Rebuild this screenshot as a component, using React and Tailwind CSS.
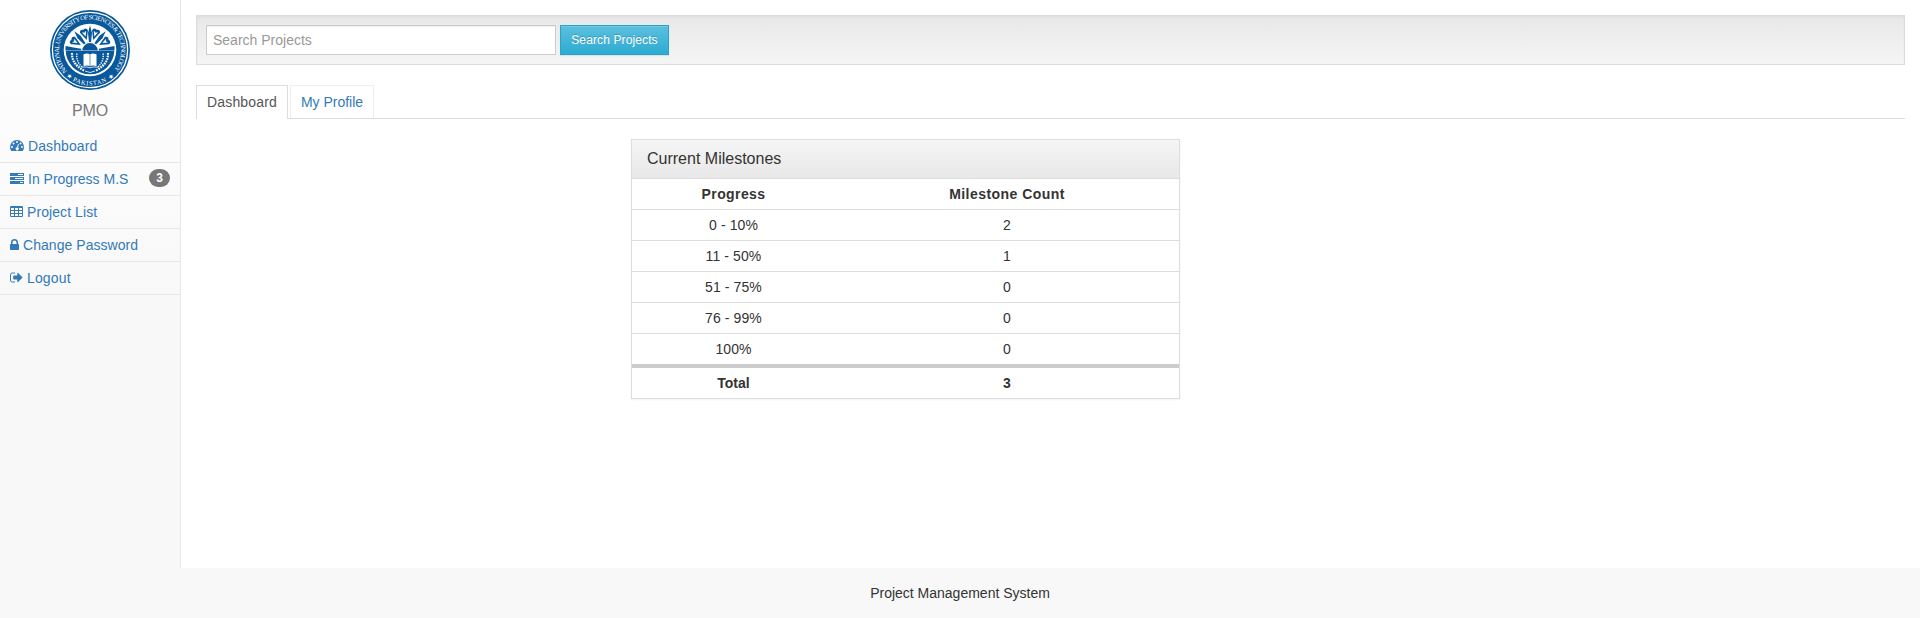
import React from "react";

const BLUE = "#08589b";

function Logo() {
  const rays = [0, 40, -40];
  const hearts = [18, -18, 61, -61];
  return (
    <svg className="block h-20 w-20" viewBox="0 0 80 80" aria-hidden="true">
      <defs>
        <path id="seal-top" d="M17.2 61.2 A31 31 0 1 1 62.8 61.2" />
        <path id="seal-bottom" d="M14.5 64.5 A35.3 35.3 0 0 0 65.5 64.5" />
        <clipPath id="seal-sky">
          <rect x="14" y="12" width="52" height="28.5" />
        </clipPath>
      </defs>
      <circle cx="40" cy="40" r="40" fill={BLUE} />
      <circle cx="40" cy="40" r="37.6" fill="none" stroke="#fff" strokeWidth="1.3" />
      <circle cx="40" cy="40" r="26.3" fill="#fff" />
      <circle cx="40" cy="40" r="24.3" fill={BLUE} />
      <g clipPath="url(#seal-sky)">
        <circle cx="40" cy="40" r="24.8" fill="#fff" />
        {rays.map((angle) => (
          <path
            key={angle}
            d="M40 15.5 L42 23 L40.8 34 H39.2 L38 23 Z"
            fill={BLUE}
            transform={`rotate(${angle} 40 40)`}
          />
        ))}
        {hearts.map((angle) => (
          <g key={angle} transform={`rotate(${angle} 40 40)`}>
            <path d="M40 29.5 L35.8 20.5 Q36.8 16.8 40 18.8 Q43.2 16.8 44.2 20.5 Z" fill={BLUE} />
            <path d="M40 25.8 L37.8 20.6 L40 21.8 L42.2 20.6 Z" fill="#fff" />
          </g>
        ))}
        <path d="M15.5 36 L31 38.8 V40.5 H15.5 Z M64.5 36 L49 38.8 V40.5 H64.5 Z" fill={BLUE} />
        <path d="M31.5 41 A8.5 8.5 0 0 1 48.5 41 Z" fill={BLUE} stroke="#fff" strokeWidth="1.2" />
      </g>
      <path
        d="M33.5 44.2 Q37.5 42.8 40 44.4 Q42.5 42.8 46.5 44.2 V56 Q42.5 54.8 40 56.2 Q37.5 54.8 33.5 56 Z"
        fill="#fff"
      />
      <path d="M40 44.5 V56" stroke={BLUE} strokeWidth="0.6" />
      <path d="M32 57.2 Q37 56.3 40 57.8 Q43 56.3 48 57.2" fill="none" stroke="#fff" strokeWidth="0.8" />
      <g fill="none" stroke="#fff" strokeWidth="2.2" strokeDasharray="1.7 0.9">
        <path d="M22 43 Q21.5 54 34 60.5" />
        <path d="M58 43 Q58.5 54 46 60.5" />
      </g>
      <g fill="none" stroke="#fff" strokeWidth="1.4" strokeDasharray="1.3 1">
        <path d="M27 43.5 Q25.5 51 32.5 57.5" />
        <path d="M53 43.5 Q54.5 51 47.5 57.5" />
      </g>
      <path d="M35 61 Q40 64 45 61" fill="none" stroke="#fff" strokeWidth="0.8" />
      <g fill="#fff" className="font-['Liberation_Serif',serif]" fontSize="6.6">
        <text>
          <textPath href="#seal-top" textLength="141" lengthAdjust="spacing">
            NATIONAL UNIVERSITY OF SCIENCES &amp; TECHNOLOGY
          </textPath>
        </text>
        <text fontSize="6.4">
          <textPath href="#seal-bottom" startOffset="2" textLength="52" lengthAdjust="spacing">
            ★ PAKISTAN ★
          </textPath>
        </text>
      </g>
    </svg>
  );
}

function GaugeIcon() {
  return (
    <svg className="block h-[14px] w-[14px]" viewBox="0 0 14 14" aria-hidden="true">
      <path
        fill="currentColor"
        fillRule="evenodd"
        d="M7 1a7 7 0 0 1 7 7c0 1.35-.38 2.65-1.1 3.77a.5.5 0 0 1-.42.23H1.52a.5.5 0 0 1-.42-.23A6.95 6.95 0 0 1 0 8a7 7 0 0 1 7-7Z M2 7a1 1 0 1 0 0 2 1 1 0 0 0 0-2Z M3.5 3.5a1 1 0 1 0 0 2 1 1 0 0 0 0-2Z M7 2a1 1 0 1 0 0 2 1 1 0 0 0 0-2Z M10.5 3.5a1 1 0 1 0 0 2 1 1 0 0 0 0-2Z M12 7a1 1 0 1 0 0 2 1 1 0 0 0 0-2Z M8.48 5.02a.5.5 0 0 0-.6.35L7.08 8.35a1.5 1.5 0 1 0 .97.25l.79-2.98a.5.5 0 0 0-.36-.6Z"
      />
    </svg>
  );
}

function TasksIcon() {
  return (
    <svg className="block h-[14px] w-[14px]" viewBox="0 0 14 14" aria-hidden="true">
      <path
        fill="currentColor"
        fillRule="evenodd"
        d="M0 1h14v3H0Z M8 2v1h5V2Z M0 5h14v3H0Z M5 6v1h8V6Z M0 9h14v3H0Z M10 10v1h3v-1Z"
      />
    </svg>
  );
}

function TableIcon() {
  return (
    <svg className="block h-[14px] w-[13px]" viewBox="0 0 13 14" aria-hidden="true">
      <path
        fill="currentColor"
        fillRule="evenodd"
        d="M1.2 1h10.6A1.2 1.2 0 0 1 13 2.2v8.6a1.2 1.2 0 0 1-1.2 1.2H1.2A1.2 1.2 0 0 1 0 10.8V2.2A1.2 1.2 0 0 1 1.2 1Z M1 3v2h3V3Z M5 3v2h3V3Z M9 3v2h3V3Z M1 6v2h3V6Z M5 6v2h3V6Z M9 6v2h3V6Z M1 9v2h3V9Z M5 9v2h3V9Z M9 9v2h3V9Z"
      />
    </svg>
  );
}

function LockIcon() {
  return (
    <svg className="block h-[14px] w-[9px]" viewBox="0 0 9 14" aria-hidden="true">
      <path
        fill="currentColor"
        fillRule="evenodd"
        d="M.75 6H1V4.5a3.5 3.5 0 0 1 7 0V6h.25A.75.75 0 0 1 9 6.75v4.5a.75.75 0 0 1-.75.75H.75A.75.75 0 0 1 0 11.25v-4.5A.75.75 0 0 1 .75 6Z M2.5 6h4V4.5a2 2 0 0 0-4 0Z"
      />
    </svg>
  );
}

function SignOutIcon() {
  return (
    <svg className="block h-[14px] w-[13px]" viewBox="0 0 13 14" aria-hidden="true">
      <path d="M5 2H2.3A1.8 1.8 0 0 0 .5 3.8v5.4A1.8 1.8 0 0 0 2.3 11H5" fill="none" stroke="currentColor" />
      <path
        fill="currentColor"
        d="M12.35 6.15 8.1 1.9a.5.5 0 0 0-.85.35V4.5h-3.5a.5.5 0 0 0-.5.5v3a.5.5 0 0 0 .5.5h3.5v2.25a.5.5 0 0 0 .85.35l4.25-4.25a.5.5 0 0 0 0-.7Z"
      />
    </svg>
  );
}

const links = [
  { label: "Dashboard", Icon: GaugeIcon, spacing: "tracking-[0.1px]" },
  { label: "In Progress M.S", Icon: TasksIcon, badge: 3, spacing: "tracking-normal" },
  { label: "Project List", Icon: TableIcon, spacing: "tracking-[0.08px]" },
  { label: "Change Password", Icon: LockIcon, spacing: "tracking-[0.05px]" },
  { label: "Logout", Icon: SignOutIcon, spacing: "tracking-[0.15px]" },
];

const rows = [
  ["0 - 10%", 2],
  ["11 - 50%", 1],
  ["51 - 75%", 0],
  ["76 - 99%", 0],
  ["100%", 0],
];

function Sidebar() {
  return (
    <aside className="w-[181px] shrink-0 border-r border-[#e7e7e7] bg-[linear-gradient(to_bottom,#ffffff_0,#f8f8f8_300px)]">
      <div className="flex justify-center pt-[10px]">
        <Logo />
      </div>
      <div className="mt-[10px] text-center text-base leading-[22px] tracking-[-0.2px] text-[#777]">PMO</div>
      <nav className="mt-[8px]">
        {links.map(({ label, Icon, badge, spacing }) => (
          <a
            key={label}
            href="#"
            className="flex h-[33px] items-center border-b border-[#e7e7e7] px-[10px] text-[#337ab7]"
          >
            <Icon />
            <span className={`ml-1 whitespace-nowrap ${spacing}`}>{label}</span>
            {badge && (
              <span className="-mt-[2px] ml-auto rounded-[10px] bg-[#777] px-[7px] py-[3px] text-xs leading-3 font-bold text-white">
                {badge}
              </span>
            )}
          </a>
        ))}
      </nav>
    </aside>
  );
}

export default function App() {
  return (
    <div className="flex h-[618px] flex-col bg-white font-['Liberation_Sans',Arial,sans-serif] text-sm leading-5 text-[#333]">
      <div className="flex h-[568px]">
        <Sidebar />
        <main className="min-w-0 flex-1 px-[15px] pt-[15px]">
          <form className="flex h-[50px] items-center gap-1 border border-[#dcdcdc] bg-linear-to-b from-[#e8e8e8] to-[#f5f5f5] px-[9px] shadow-[inset_0_1px_3px_rgba(0,0,0,0.05),0_1px_0_rgba(255,255,255,0.1)]">
            <input
              type="text"
              placeholder="Search Projects"
              className="h-[30px] w-[350px] border border-[#ccc] bg-white px-[6px] text-sm shadow-[inset_0_1px_1px_rgba(0,0,0,0.075)] outline-none placeholder:text-[#999]"
            />
            <button
              type="button"
              className="h-[30px] w-[109px] border border-[#28a4c9] bg-linear-to-b from-[#5bc0de] to-[#2aabd2] text-xs tracking-[0.12px] whitespace-nowrap text-white shadow-[inset_0_1px_0_rgba(255,255,255,0.15),0_1px_1px_rgba(0,0,0,0.075)] [text-shadow:0_-1px_0_rgba(0,0,0,0.2)]"
            >
              Search Projects
            </button>
          </form>

          <div className="mt-5 flex h-[34px] gap-[2px] border-b border-[#ddd]">
            <a href="#" className="-mb-px flex w-[92px] items-center justify-center border border-b-0 border-[#ddd] bg-white pb-px tracking-[0.15px] text-[#555]">
              Dashboard
            </a>
            <a href="#" className="flex w-[84px] items-center justify-center border border-b-0 border-[#eee] pb-px text-[#337ab7]">
              My Profile
            </a>
          </div>

          <section className="mt-5 ml-[435px] w-[549px] border border-[#ddd] bg-white shadow-[0_1px_2px_rgba(0,0,0,0.05)]">
            <h3 className="flex h-[39px] items-center border-b border-[#ddd] bg-linear-to-b from-[#f5f5f5] to-[#e8e8e8] px-[15px] text-base">
              Current Milestones
            </h3>
            <table className="w-full table-fixed border-separate border-spacing-0 text-center">
              <colgroup>
                <col className="w-[203px]" />
                <col />
              </colgroup>
              <thead>
                <tr className="h-[30px]">
                  <th className="tracking-[0.4px]">Progress</th>
                  <th className="tracking-[0.45px]">Milestone Count</th>
                </tr>
              </thead>
              <tbody>
                {rows.map(([range, count]) => (
                  <tr key={range} className="h-[31px]">
                    <td className="border-t border-[#ddd] tracking-[0.1px]">{range}</td>
                    <td className="border-t border-[#ddd]">{count}</td>
                  </tr>
                ))}
                <tr className="h-[34px] font-bold">
                  <td className="border-t-4 border-[#ccc]">Total</td>
                  <td className="border-t-4 border-[#ccc]">3</td>
                </tr>
              </tbody>
            </table>
          </section>
        </main>
      </div>
      <footer className="flex h-[50px] items-center justify-center bg-[#f8f8f8]">Project Management System</footer>
    </div>
  );
}
